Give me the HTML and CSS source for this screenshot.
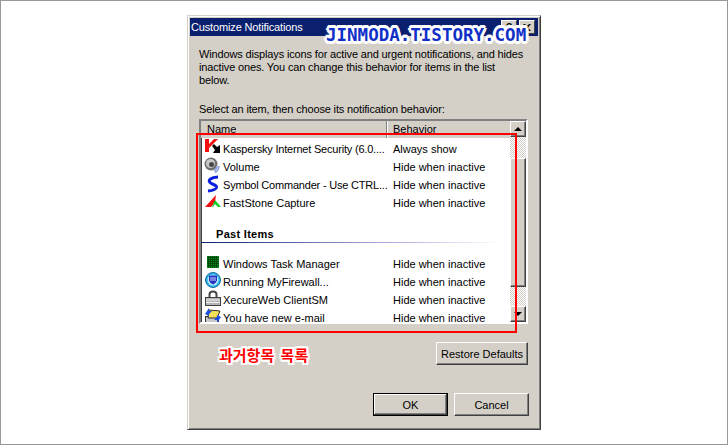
FILE: index.html
```html
<!DOCTYPE html>
<html lang="en">
<head>
    <meta charset="UTF-8">
    <title>Customize Notifications</title>
    <link rel="stylesheet" href="styles.css">
</head>
<body>
<div class="stage">
    <div class="dialog">
        <div class="titlebar">
            <span class="title">Customize Notifications</span>
            <span class="title-buttons">
                <span class="title-btn">?</span>
                <span class="title-btn title-close">
                    <svg width="8" height="7" viewBox="0 0 8 7"><path d="M0 0h2l2 2 2-2h2L5 3.500 8 7H6L4 5 2 7H0l3-3.500z" fill="#000"/></svg>
                </span>
            </span>
            <span class="watermark">JINMODA.TISTORY.COM</span>
        </div>

        <div class="content">
            <p class="intro">Windows displays icons for active and urgent notifications, and hides inactive ones. You can change this behavior for items in the list below.</p>
            <p class="prompt">Select an item, then choose its notification behavior:</p>

            <div class="listbox">
                <div class="list-main">
                    <div class="list-head">
                        <span class="head-name">Name</span>
                        <span class="head-behavior">Behavior</span>
                    </div>
                    <div class="list-body">
                        <div class="row">
                            <span class="row-icon">
                                <svg width="16" height="16" viewBox="0 0 16 16"><path d="M1 1h4v5l5-5h4L7 8l-2 2v4H1z" fill="#f01010"/><path d="M8 8l2-2 3 3 3-2v8H9l2-3z" fill="#000"/></svg>
                            </span>
                            <span class="row-name row-name-long">Kaspersky Internet Security (6.0....</span>
                            <span class="row-behavior">Always show</span>
                        </div>
                        <div class="row">
                            <span class="row-icon">
                                <svg width="16" height="16" viewBox="0 0 16 16"><circle cx="7" cy="8" r="6.500" fill="#707070"/><circle cx="6.500" cy="7.500" r="4.500" fill="#c8c8c8"/><circle cx="7.500" cy="8.500" r="2.500" fill="#484848"/><path d="M13 10q0 3-3 5M15 10q0 4-4 6.500" fill="none" stroke="#8f9fe0" stroke-width="1.500"/></svg>
                            </span>
                            <span class="row-name">Volume</span>
                            <span class="row-behavior">Hide when inactive</span>
                        </div>
                        <div class="row">
                            <span class="row-icon">
                                <svg width="16" height="16" viewBox="0 0 16 16"><path d="M14 3C7 3.500 3.500 6 6 8.500c2.500 2.500 7 2 6.500 5C12 15.500 8 16.500 4 17" fill="none" stroke="#0a1fe0" stroke-width="3"/></svg>
                            </span>
                            <span class="row-name row-name-long">Symbol Commander - Use CTRL...</span>
                            <span class="row-behavior">Hide when inactive</span>
                        </div>
                        <div class="row">
                            <span class="row-icon">
                                <svg width="16" height="16" viewBox="0 0 16 16"><path d="M1 15L12 3l-1 7-4 5z" fill="#f01010"/><path d="M11 8l6 7h-3l-3-3-2 3H8z" fill="#10d020"/></svg>
                            </span>
                            <span class="row-name">FastStone Capture</span>
                            <span class="row-behavior">Hide when inactive</span>
                        </div>
                        <div class="group">
                            <div class="group-title">Past Items</div>
                            <div class="group-line"></div>
                        </div>
                        <div class="row">
                            <span class="row-icon">
                                <svg width="16" height="16" viewBox="0 0 16 16"><rect x="3" y="3" width="12" height="12" fill="#0b8a1c"/><path d="M4.500 3v12M6.500 3v12M8.500 3v12M10.500 3v12M12.500 3v12M3 4.500h12M3 6.500h12M3 8.500h12M3 10.500h12M3 12.500h12" stroke="#064a0e"/></svg>
                            </span>
                            <span class="row-name">Windows Task Manager</span>
                            <span class="row-behavior">Hide when inactive</span>
                        </div>
                        <div class="row">
                            <span class="row-icon">
                                <svg width="16" height="16" viewBox="0 0 16 16"><circle cx="9" cy="9" r="7.500" fill="#28b4e6" stroke="#1a6aa0"/><circle cx="9" cy="9" r="5.500" fill="#bfeafa"/><path d="M5 4.500h8v5q-1 3-4 4-3-1-4-4z" fill="#2030c0"/><path d="M6 7h6M6 9h6" stroke="#cfd8ff"/></svg>
                            </span>
                            <span class="row-name">Running MyFirewall...</span>
                            <span class="row-behavior">Hide when inactive</span>
                        </div>
                        <div class="row">
                            <span class="row-icon">
                                <svg width="16" height="16" viewBox="0 0 16 16"><path d="M4.500 8V5.500q0-4 4.500-4t4.500 4V8h-2V5.500q0-2-2.500-2T6.500 5.500V8z" fill="#484848"/><rect x="1.500" y="8.500" width="15" height="8" fill="#b4b4b4" stroke="#404040"/><path d="M2 11h14M2 13.500h14" stroke="#f0f0f0"/></svg>
                            </span>
                            <span class="row-name">XecureWeb ClientSM</span>
                            <span class="row-behavior">Hide when inactive</span>
                        </div>
                        <div class="row">
                            <span class="row-icon">
                                <svg width="16" height="16" viewBox="0 0 16 16"><rect x="1.500" y="9.500" width="13" height="6" fill="#c8c8c8" stroke="#303030"/><path d="M5 3l11 1-3 7H4z" fill="#f2e05a" stroke="#303030"/><path d="M1 7l4-6v3h3L5 7v2zM17 10l-4 6v-3h-3l3-3V8z" fill="#1a50e0"/></svg>
                            </span>
                            <span class="row-name">You have new e-mail</span>
                            <span class="row-behavior">Hide when inactive</span>
                        </div>
                    </div>
                </div>
                <div class="scrollbar">
                    <span class="sb-btn"><span class="arrow-up"></span></span>
                    <span class="sb-track"><span class="sb-thumb"></span></span>
                    <span class="sb-btn"><span class="arrow-down"></span></span>
                </div>
            </div>

            <div class="restore-row">
                <button class="btn btn-restore">Restore Defaults</button>
            </div>
            <div class="actions">
                <button class="btn btn-ok">OK</button>
                <button class="btn">Cancel</button>
            </div>
        </div>

        <div class="red-box"></div>
        <div class="red-label">과거항목 목록</div>
    </div>
</div>
</body>
</html>
```

FILE: styles.css
```css
* {
    box-sizing: border-box;
}

html, body {
    margin: 0;
    padding: 0;
    background: #fff;
}

.stage {
    width: 728px;
    height: 445px;
    border: 1px solid #999;
    padding: 14px 0 0 186px;
    overflow: hidden;
}

.dialog {
    position: relative;
    width: 354px;
    height: 415px;
    background: #d4d0c8;
    border: 1px solid;
    border-color: #d4d0c8 #404040 #404040 #d4d0c8;
    box-shadow: inset 1px 1px 0 #fff, inset -1px -1px 0 #808080;
    padding: 2px;
    font-family: "Liberation Sans", Arial, sans-serif;
    font-size: 11px;
    color: #000;
}

.titlebar {
    position: relative;
    height: 18px;
    background: #0a1f6e;
    display: flex;
    align-items: center;
    justify-content: space-between;
    padding: 0 3px 0 1px;
}

.title {
    color: #fff;
    font-size: 11px;
    line-height: 18px;
    letter-spacing: -0.15px;
}

.title-buttons {
    display: flex;
}

.title-btn {
    width: 16px;
    height: 14px;
    background: #d4d0c8;
    border: 1px solid;
    border-color: #fff #404040 #404040 #fff;
    display: flex;
    align-items: center;
    justify-content: center;
    font-size: 11px;
    font-weight: bold;
    line-height: 1;
}

.title-close {
    margin-left: 2px;
}

.watermark {
    position: absolute;
    left: 136px;
    top: 6px;
    font-family: "DejaVu Sans Mono", monospace;
    font-weight: bold;
    font-size: 17.500px;
    line-height: 22px;
    white-space: nowrap;
    color: #1030c8;
    text-shadow: 3px 0 0 #fff, -3px 0 0 #fff, 0 3px 0 #fff, 0 -3px 0 #fff, 2px 2px 0 #fff, -2px -2px 0 #fff, 2px -2px 0 #fff, -2px 2px 0 #fff, 1px 3px 0 #fff, -1px 3px 0 #fff, 1px -3px 0 #fff, -1px -3px 0 #fff;
}

.content {
    padding: 12px 9px 0 9px;
}

.intro {
    margin: 0;
    line-height: 13px;
    width: 326px;
    letter-spacing: -0.15px;
}

.prompt {
    margin: 16px 0 0;
    line-height: 13px;
    letter-spacing: -0.15px;
}

.listbox {
    display: flex;
    width: 329px;
    height: 205px;
    margin-top: 3px;
    border: 2px solid;
    border-color: #808080 #fff #fff #808080;
    box-shadow: inset 1px 1px 0 #404040;
    background: #fff;
}

.list-main {
    flex: 1;
    min-width: 0;
    display: flex;
    flex-direction: column;
}

.list-head {
    height: 17px;
    display: flex;
    flex-shrink: 0;
    background: #d4d0c8;
    line-height: 17px;
}

.head-name {
    width: 186px;
    padding-left: 6px;
    border-right: 1px solid #808080;
    box-shadow: 1px 0 0 #fff;
}

.head-behavior {
    flex: 1;
    padding-left: 6px;
}

.list-body {
    flex: 1;
    overflow: hidden;
    padding-top: 2px;
}

.row {
    display: flex;
    align-items: center;
    height: 18px;
    padding-left: 3px;
}

.row-icon {
    width: 16px;
    height: 16px;
    flex-shrink: 0;
    align-self: flex-start;
    margin-top: -2px;
}

.row-icon svg {
    display: block;
    overflow: visible;
}

.row-name {
    width: 173px;
    padding-left: 3px;
    white-space: nowrap;
}

.row-name-long {
    letter-spacing: -0.2px;
}

.row-behavior {
    white-space: nowrap;
}

.group {
    height: 43px;
    padding: 15px 0 0 15px;
}

.group-title {
    font-weight: bold;
    line-height: 14px;
    letter-spacing: 0.3px;
}

.group-line {
    height: 1px;
    margin: 1px 8px 0 -15px;
    background: linear-gradient(90deg, #0a246a, #a6a6e0 60%, #fff);
}

.scrollbar {
    width: 16px;
    flex-shrink: 0;
    display: flex;
    flex-direction: column;
}

.sb-btn {
    height: 16px;
    flex-shrink: 0;
    background: #d4d0c8;
    border: 1px solid;
    border-color: #fff #404040 #404040 #fff;
    box-shadow: inset -1px -1px 0 #808080;
    display: flex;
    align-items: center;
    justify-content: center;
}

.sb-track {
    flex: 1;
    padding-top: 21px;
    padding-bottom: 19px;
    display: flex;
    background-color: #e8e6e2;
    background-image: repeating-conic-gradient(#d4d0c8 0 25%, #fff 0 50%);
    background-size: 2px 2px;
}

.sb-thumb {
    flex: 1;
    background: #d4d0c8;
    border: 1px solid;
    border-color: #fff #404040 #404040 #fff;
    box-shadow: inset -1px -1px 0 #808080;
}

.arrow-up,
.arrow-down {
    width: 0;
    height: 0;
    border-left: 4px solid transparent;
    border-right: 4px solid transparent;
}

.arrow-up {
    border-bottom: 4px solid #000;
}

.arrow-down {
    border-top: 4px solid #000;
}

.restore-row {
    display: flex;
    justify-content: flex-end;
    width: 329px;
    margin-top: 18px;
}

.btn {
    width: 75px;
    height: 23px;
    padding: 0;
    background: #d4d0c8;
    border: 1px solid;
    border-color: #fff #404040 #404040 #fff;
    box-shadow: inset -1px -1px 0 #808080;
    font-family: "Liberation Sans", Arial, sans-serif;
    font-size: 11px;
    color: #000;
}

.btn-restore {
    width: 92px;
}

.btn-ok {
    border: 1px solid #000;
    box-shadow: inset -1px -1px 0 #404040, inset 1px 1px 0 #fff, inset -2px -2px 0 #808080;
}

.actions {
    display: flex;
    justify-content: flex-end;
    gap: 6px;
    width: 330px;
    margin-top: 28px;
}

.red-box {
    position: absolute;
    left: 8px;
    top: 117px;
    width: 321px;
    height: 200px;
    border: 2px solid #f00;
}

.red-label {
    position: absolute;
    left: 31px;
    top: 329px;
    font-family: "Noto Sans CJK KR", sans-serif;
    font-weight: bold;
    font-size: 15px;
    line-height: 20px;
    word-spacing: 3px;
    white-space: nowrap;
    color: #f00;
    text-shadow: 2px 0 0 #fff, -2px 0 0 #fff, 0 2px 0 #fff, 0 -2px 0 #fff, 2px 2px 0 #fff, -2px -2px 0 #fff, 2px -2px 0 #fff, -2px 2px 0 #fff;
}
```
